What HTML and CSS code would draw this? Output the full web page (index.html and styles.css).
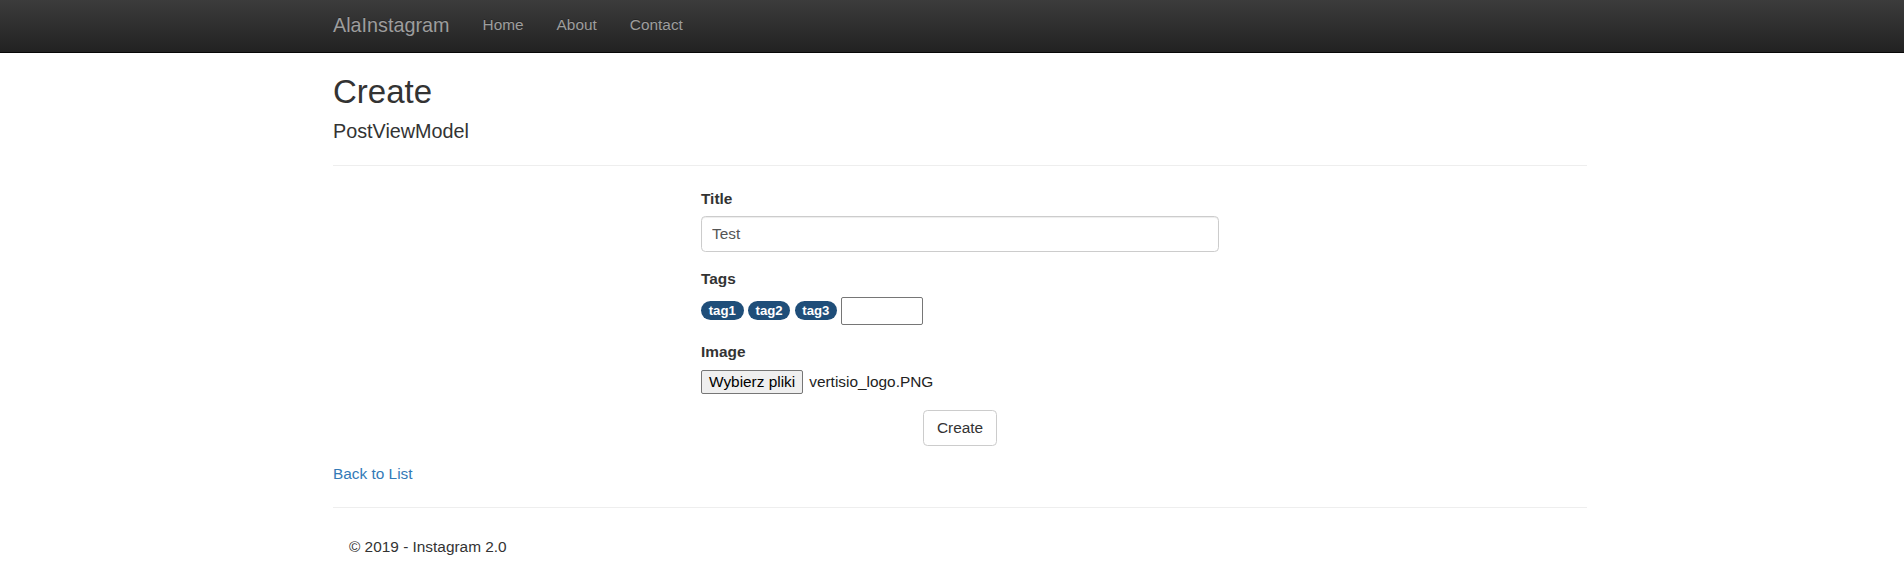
FILE: index.html
```html
<!DOCTYPE html>
<html lang="pl">
<head>
<meta charset="utf-8">
<title>Create - AlaInstagram</title>
<link rel="stylesheet" href="styles.css">
</head>
<body>
<nav class="navbar">
  <div class="container nav-inner">
    <a class="brand" href="#">AlaInstagram</a>
    <ul class="nav">
      <li><a href="#">Home</a></li>
      <li><a href="#">About</a></li>
      <li><a href="#">Contact</a></li>
    </ul>
  </div>
</nav>
<div class="container body-content">
  <h2 class="page-title">Create</h2>
  <h4 class="subtitle">PostViewModel</h4>
  <hr class="rule">
  <form class="post-form">
    <div class="form-group">
      <label class="control-label">Title</label>
      <input class="form-control" type="text" value="Test">
    </div>
    <div class="form-group">
      <label class="control-label">Tags</label>
      <div class="tag-row">
        <span class="badge">tag1</span>
        <span class="badge">tag2</span>
        <span class="badge">tag3</span>
        <span class="tag-input"></span>
      </div>
    </div>
    <div class="form-group">
      <label class="control-label">Image</label>
      <div class="file-row">
        <span class="file-btn">Wybierz pliki</span>
        <span class="file-name">vertisio_logo.PNG</span>
      </div>
    </div>
    <div class="form-group center">
      <button class="btn" type="button">Create</button>
    </div>
  </form>
  <div class="back"><a href="#">Back to List</a></div>
  <hr class="rule">
  <footer class="footer">
    <p>© 2019 - Instagram 2.0</p>
  </footer>
</div>
</body>
</html>
```
FILE: styles.css
```css
html, body {
  margin: 0;
  padding: 0;
}
body {
  font-family: "Liberation Sans", Arial, Helvetica, sans-serif;
  font-size: 15.4px;
  line-height: 22px;
  color: #333;
  background: #fff;
}
a {
  color: #337ab7;
  text-decoration: none;
}
.container {
  width: 1254px;
  margin-left: calc(50% - 619px);
}
.navbar {
  height: 52px;
  background: linear-gradient(to bottom, #3c3c3c 0, #222 100%);
  border-bottom: 1px solid #080808;
}
.nav-inner {
  display: flex;
  align-items: flex-start;
}
.brand {
  font-size: 19.8px;
  line-height: 22px;
  padding: 14px 16.5px 14px 0;
  color: #9d9d9d;
  text-shadow: 0 -1px 0 rgba(0,0,0,.25);
}
.nav {
  list-style: none;
  margin: 0;
  padding: 0;
  display: flex;
}
.nav a {
  display: block;
  padding: 13.5px 16.5px;
  line-height: 22px;
  color: #9d9d9d;
  text-shadow: 0 -1px 0 rgba(0,0,0,.25);
}
.page-title {
  font-size: 33px;
  font-weight: 500;
  line-height: 1.1;
  margin: 21px 0 11px;
}
.subtitle {
  font-size: 19.8px;
  font-weight: 500;
  line-height: 1.1;
  margin: 11px 0 11px;
}
.rule {
  border: 0;
  border-top: 1px solid #eee;
  margin: 22px 0;
  height: 0;
}
.post-form {
  width: 518px;
  margin: 0 auto;
}
.form-group {
  margin-bottom: 16.5px;
}
.form-group.center {
  text-align: center;
}
.control-label {
  display: block;
  font-weight: bold;
  margin-bottom: 5.5px;
}
.form-control {
  display: block;
  box-sizing: border-box;
  width: 100%;
  height: 36px;
  padding: 6px 10px;
  font-family: inherit;
  font-size: 15.4px;
  color: #555;
  background: #fff;
  border: 1px solid #ccc;
  border-radius: 4.4px;
  box-shadow: inset 0 1px 1px rgba(0,0,0,.075);
}
.tag-row {
  display: flex;
  align-items: center;
  gap: 4.3px;
  padding-top: 1px;
}
.badge {
  display: inline-block;
  box-sizing: border-box;
  height: 19.5px;
  padding: 3px 7.7px;
  font-size: 13.2px;
  line-height: 13.5px;
  font-weight: bold;
  color: #fff;
  background: #1f4e79;
  border-radius: 10px;
}
.tag-input {
  display: inline-block;
  box-sizing: border-box;
  width: 82px;
  height: 28px;
  border: 1px solid #767676;
  border-radius: 2px;
  background: #fff;
}
.file-row {
  display: flex;
  align-items: center;
  gap: 6px;
  padding-top: 1px;
}
.file-btn {
  display: inline-block;
  box-sizing: border-box;
  height: 24px;
  padding: 2px 7px;
  line-height: 18px;
  font-size: 15.4px;
  color: #000;
  background: #efefef;
  border: 1px solid #767676;
  border-radius: 2px;
}
.file-name {
  font-size: 15.4px;
  color: #222;
}
.btn {
  display: inline-block;
  height: 36px;
  padding: 6px 13px;
  font-family: inherit;
  font-size: 15.4px;
  line-height: 22px;
  color: #333;
  background: #fff;
  border: 1px solid #ccc;
  border-radius: 4.4px;
}
.footer p {
  margin: 0 0 11px;
  padding: 6px 0 0 16px;
}
```
